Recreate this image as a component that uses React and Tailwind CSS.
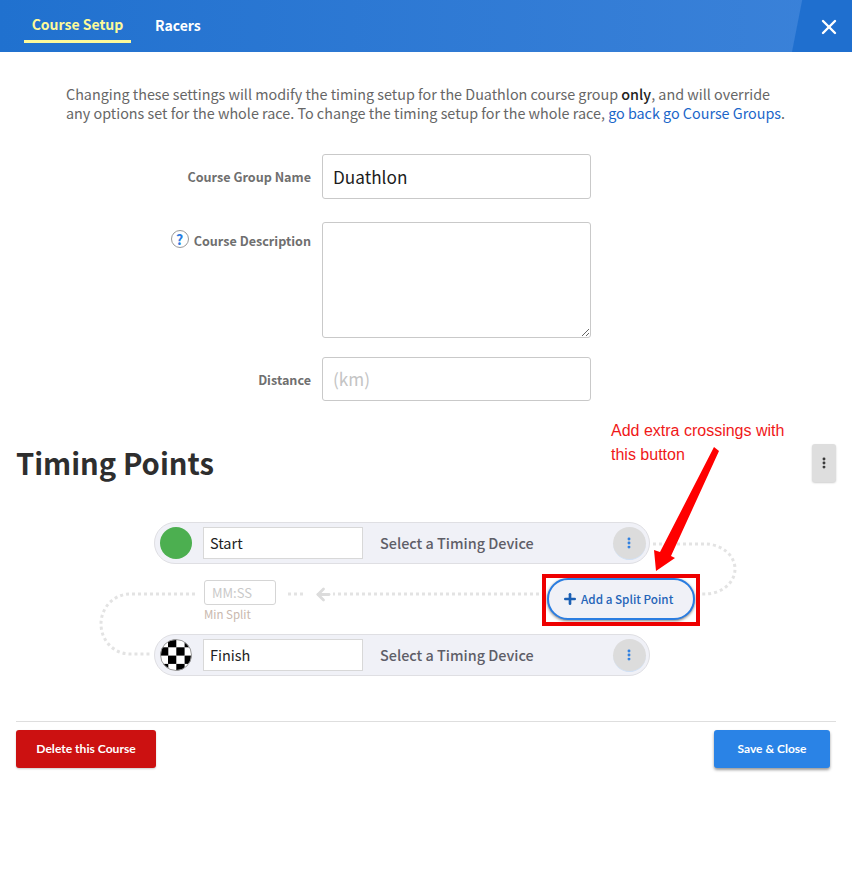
import React from 'react'
import { X, Plus, EllipsisVertical, ArrowLeft } from 'lucide-react'

const sans = "font-['Noto_Sans_CJK_SC','Noto_Sans',sans-serif]"

const FormRow = ({ label, help, className, children }) => (
  <div className={`flex ${className}`}>
    <div className="w-[311px] flex justify-end items-start shrink-0">
      {help && (
        <span className="w-[18px] h-[18px] mt-[8px] mr-[5px] rounded-full border border-[#9a9a9a] flex items-center justify-center text-[#2a7de1] text-[14px] font-bold leading-none">?</span>
      )}
      {label}
    </div>
    <div className="ml-[11px] w-[269px]">{children}</div>
  </div>
)

const Label = ({ children, className }) => (
  <span className={`text-[12.6px] leading-[18px] font-semibold text-[#6f6f6f] ${className}`}>{children}</span>
)

const Kebab = () => (
  <div className="w-[33px] h-[33px] rounded-full bg-[#dcdcdc] border-b border-[#cfe0f5] flex items-center justify-center pr-[1px]">
    <EllipsisVertical className="w-[14px] h-[14px] text-[#2a7de1]" strokeWidth={3} />
  </div>
)

const Checker = () => (
  <svg width="32" height="32" viewBox="0 0 32 32" className="shrink-0">
    <defs>
      <clipPath id="disc"><circle cx="16" cy="16" r="15.5" /></clipPath>
    </defs>
    <g clipPath="url(#disc)">
      <rect width="32" height="32" fill="#fff" />
      <g fill="#000">
        <rect x="8" y="0" width="8.3" height="8.3" />
        <rect x="24.6" y="0" width="8.3" height="8.3" />
        <rect x="0" y="8.3" width="8.3" height="8.3" />
        <rect x="16.3" y="8.3" width="8.3" height="8.3" />
        <rect x="8" y="16.6" width="8.3" height="8.3" />
        <rect x="24.6" y="16.6" width="8.3" height="8.3" />
        <rect x="0" y="24.9" width="8.3" height="8.3" />
        <rect x="16.3" y="24.9" width="8.3" height="8.3" />
      </g>
    </g>
    <circle cx="16" cy="16" r="15.5" fill="none" stroke="#999" strokeWidth="1" />
  </svg>
)

const TimingRow = ({ name, icon }) => (
  <div className="w-[496px] h-[42px] rounded-full bg-[#f0f1f7] border border-[#dfdfe3] flex items-center pl-[5px] pr-[3px]">
    {icon}
    <div className="ml-[11px] w-[160px] h-[32px] bg-white border border-[#d8d8d8] pl-[6px] flex items-center text-[14.5px] text-[#222]">{name}</div>
    <span className="ml-[17px] text-[14.4px] font-medium text-[#5e5e68]">Select a Timing Device</span>
    <div className="ml-auto"><Kebab /></div>
  </div>
)

export default function App() {
  return (
    <div className={`relative w-[852px] h-[883px] bg-white overflow-hidden ${sans}`}>
      {/* header */}
      <div className="relative h-[52px] bg-gradient-to-r from-[#2071cf] to-[#3b82d9] flex items-start pl-[24px]">
        <div className="h-[43px] w-[107px] pt-[8px] border-b-[3px] border-[#fdf99a] flex items-center justify-center text-[14px] font-semibold text-[#fdf99a]">Course Setup</div>
        <div className="h-[43px] pt-[7px] ml-[24px] flex items-center text-[14px] font-semibold text-white">Racers</div>
        <div className="absolute top-0 right-0 w-[60px] h-[52px] bg-[#1f6fcf] [clip-path:polygon(17%_0,100%_0,100%_100%,0_100%)] flex items-center justify-end pr-[11px] pt-[2px]">
          <X className="w-[24px] h-[24px] text-white" strokeWidth={2.4} />
        </div>
      </div>

      {/* intro */}
      <p className="pt-[32px] pl-[66px] pr-[50px] text-[14.35px] leading-[19px] text-[#666]">
        Changing these settings will modify the timing setup for the Duathlon course group <span className="font-medium text-[#222]">only</span>, and will override<br />any options set for the whole race. To change the timing setup for the whole race, <span className="text-[#1a66c9]">go back go Course Groups</span>.
      </p>

      {/* form */}
      <div className="mt-[32px]">
        <FormRow label={<Label className="mt-[14px]">Course Group Name</Label>} className="h-[45px]">
          <div className="h-[45px] rounded-[3px] border border-[#c9c9c9] px-[10px] flex items-center text-[17.2px] text-[#1c1c1c]">Duathlon</div>
        </FormRow>
        <FormRow help label={<Label className="mt-[10px]">Course Description</Label>} className="h-[116px] mt-[23px]">
          <textarea className="block w-full h-[116px] rounded-[3px] border border-[#c9c9c9] outline-none" />
        </FormRow>
        <FormRow label={<Label className="mt-[14px]">Distance</Label>} className="h-[44px] mt-[19px]">
          <div className="h-[44px] rounded-[3px] border border-[#c9c9c9] px-[10px] flex items-center text-[17.2px] text-[#c4c4c4]">(km)</div>
        </FormRow>
      </div>

      {/* timing points heading */}
      <div className="flex items-start justify-between mt-[43px] pl-[16px] pr-[16px]">
        <h2 className="text-[29.2px] leading-[40px] font-bold text-[#2e2e2e] mt-[-2px]">Timing Points</h2>
        <div className="w-[24px] h-[38px] rounded-[3px] bg-[#dedede] shadow-[0_1px_2px_rgba(0,0,0,0.2)] flex items-center justify-center">
          <EllipsisVertical className="w-[14px] h-[14px] text-[#333]" strokeWidth={3} />
        </div>
      </div>

      {/* course diagram */}
      <div className="relative mt-[40px] ml-[154px] w-[496px] h-[154px]">
        <svg className="absolute left-[-54px] top-0 overflow-visible" width="640" height="154" fill="none" stroke="#e3e3e3" strokeWidth="3" strokeDasharray="3 3">
          <path d="M553 22 H605 A30 25 0 0 1 605 72 H597" />
          <path d="M95 72 H30 A29 30 0 0 0 30 132 H52" />
          <path d="M445 72 H233 M203 72 H188" />
        </svg>
        <ArrowLeft className="absolute left-[160px] top-[63px] w-[19px] h-[19px] text-[#dcdcdc]" strokeWidth={3.5} />
        <div className="absolute left-[50px] top-[58px]">
          <div className="w-[72px] h-[25px] bg-white rounded-[3px] border border-[#d5d5d5] pl-[7px] flex items-center text-[13px] text-[#c9c9c9]">MM:SS</div>
          <div className="text-[11.5px] leading-[16px] mt-[1px] text-[#c9b8ae]">Min Split</div>
        </div>
        <TimingRow name="Start" icon={<div className="w-[32px] h-[32px] rounded-full bg-[#4caf50] shrink-0" />} />
        <div className="h-[70px]" />
        <TimingRow name="Finish" icon={<Checker />} />
        <button className="absolute left-[393px] top-[56px] w-[148px] h-[42px] rounded-full bg-[#f0f1f7] border-2 border-[#2a7de1] shadow-[0_1px_3px_rgba(0,0,0,0.5)] flex items-center pl-[13px] text-[11.7px] font-medium text-[#2464b8]">
          <Plus className="w-[16px] h-[16px] mr-[3px] text-[#1a5fb4]" strokeWidth={4} />
          Add a Split Point
        </button>
      </div>

      {/* footer */}
      <div className="mx-[16px] mt-[45px] border-t border-[#dedede] pt-[8px] flex justify-between">
        <button className="w-[140px] h-[38px] rounded-[3px] bg-[#cc1111] shadow-[0_1px_2px_rgba(0,0,0,0.2)] text-white text-[12.1px] font-bold font-['Lato',sans-serif]">Delete this Course</button>
        <button className="w-[116px] h-[38px] mr-[6px] rounded-[3px] bg-[#2a83e6] shadow-[0_2px_3px_rgba(0,0,0,0.4)] text-white text-[12px] font-bold font-['Lato',sans-serif]">Save &amp; Close</button>
      </div>

      {/* annotation drawn over the page */}
      <div className="absolute left-[611px] top-[419px] text-[16px] leading-[24px] text-[#f01818] font-['Liberation_Sans',sans-serif]">
        Add extra crossings with<br />this button
      </div>
      <svg className="absolute left-[640px] top-[440px]" width="90" height="140">
        <polygon points="74,7 79,11 31,116 35,118 16,131 14,110 20,112" fill="#ff0000" />
      </svg>
      <div className="absolute left-[542px] top-[574px] w-[158px] h-[52px] border-[4px] border-[#ee0000]" />
    </div>
  )
}
